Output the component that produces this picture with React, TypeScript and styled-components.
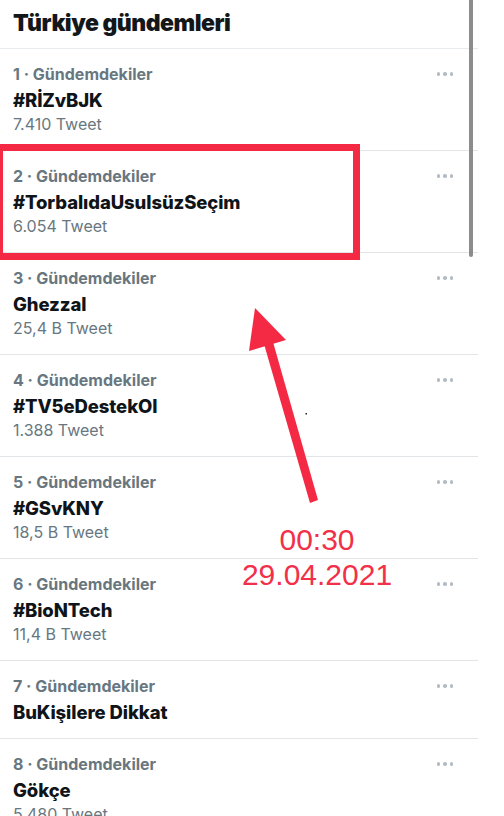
import React from "react";
import styled, { createGlobalStyle } from "styled-components";

const GlobalStyle = createGlobalStyle`
  html, body {
    margin: 0;
    padding: 0;
    background: #ffffff;
    overflow: hidden;
  }
  body {
    font-family: Inter, "Noto Sans", "Liberation Sans", sans-serif;
    -webkit-font-smoothing: antialiased;
  }
`;

const Page = styled.div`
  position: relative;
  width: 504px;
  height: 816px;
  overflow: hidden;
  background: #ffffff;
`;

const Panel = styled.div`
  width: 478px;
  display: flex;
  flex-direction: column;
`;

const Header = styled.div`
  height: 49px;
  display: flex;
  align-items: center;
  padding-left: 13px;
  padding-bottom: 2px;
  border-bottom: 1px solid #e8ebee;
  box-sizing: border-box;
  font-size: 23px;
  font-weight: 900;
  letter-spacing: -0.5px;
  color: #14171a;
`;

const Row = styled.div<{ $short?: boolean }>`
  display: flex;
  align-items: flex-start;
  justify-content: space-between;
  padding: 14px 25px 0 13px;
  border-bottom: 1px solid #e1e5e8;
  box-sizing: border-box;
  height: ${(p) => (p.$short ? "78px" : "102px")};
`;

const Texts = styled.div`
  display: flex;
  flex-direction: column;
`;

const Label = styled.div`
  font-size: 16px;
  line-height: 22px;
  font-weight: 700;
  color: #68777f;
  letter-spacing: 0px;
`;

const Topic = styled.div`
  font-size: 18.5px;
  line-height: 26px;
  font-weight: 800;
  color: #0f1419;
  letter-spacing: -0.1px;
  margin-top: 2px;
`;

const Count = styled.div`
  font-size: 16px;
  line-height: 22px;
  font-weight: 400;
  color: #68777f;
  letter-spacing: 0px;
`;

const More = styled.div`
  display: flex;
  gap: 3px;
  margin-top: 9px;
`;

const Dot = styled.span`
  width: 3.5px;
  height: 3.5px;
  border-radius: 50%;
  background: #b3bcc4;
`;

const Scrollbar = styled.div`
  position: absolute;
  left: 469px;
  top: -4px;
  width: 4px;
  height: 261px;
  border-radius: 2px;
  background: #8c8c8c;
`;

const HighlightBox = styled.div`
  position: absolute;
  left: -4px;
  top: 144px;
  width: 364px;
  height: 116px;
  box-sizing: border-box;
  border: 7px solid #f42a45;
`;

const ArrowSvg = styled.svg`
  position: absolute;
  left: 0;
  top: 0;
  width: 504px;
  height: 816px;
  pointer-events: none;
`;

const Stamp = styled.div`
  position: absolute;
  left: 217px;
  top: 522px;
  width: 200px;
  text-align: center;
  font-family: "Liberation Sans", Arial, sans-serif;
  font-size: 30px;
  line-height: 35px;
  color: #f23049;
`;

type Trend = { n: number; topic: string; count?: string };

const trends: Trend[] = [
  { n: 1, topic: "#RİZvBJK", count: "7.410 Tweet" },
  { n: 2, topic: "#TorbalıdaUsulsüzSeçim", count: "6.054 Tweet" },
  { n: 3, topic: "Ghezzal", count: "25,4 B Tweet" },
  { n: 4, topic: "#TV5eDestekOl", count: "1.388 Tweet" },
  { n: 5, topic: "#GSvKNY", count: "18,5 B Tweet" },
  { n: 6, topic: "#BioNTech", count: "11,4 B Tweet" },
  { n: 7, topic: "BuKişilere Dikkat" },
  { n: 8, topic: "Gökçe", count: "5.480 Tweet" },
];

export default function App() {
  return (
    <Page>
      <GlobalStyle />
      <Panel>
        <Header>Türkiye gündemleri</Header>
        {trends.map((t) => (
          <Row key={t.n} $short={!t.count}>
            <Texts>
              <Label>{t.n} · Gündemdekiler</Label>
              <Topic>{t.topic}</Topic>
              {t.count && <Count>{t.count}</Count>}
            </Texts>
            <More>
              <Dot />
              <Dot />
              <Dot />
            </More>
          </Row>
        ))}
      </Panel>
      <Scrollbar />
      <HighlightBox />
      <ArrowSvg viewBox="0 0 504 816">
        <polygon points="255,308 249,351 286,340" fill="#f42a45" />
        <polygon points="264,344 273,342 318,500 310,503" fill="#f42a45" />
        <rect x="305.5" y="413" width="1.5" height="1.5" fill="#222" />
      </ArrowSvg>
      <Stamp>
        00:30
        <br />
        29.04.2021
      </Stamp>
    </Page>
  );
}
